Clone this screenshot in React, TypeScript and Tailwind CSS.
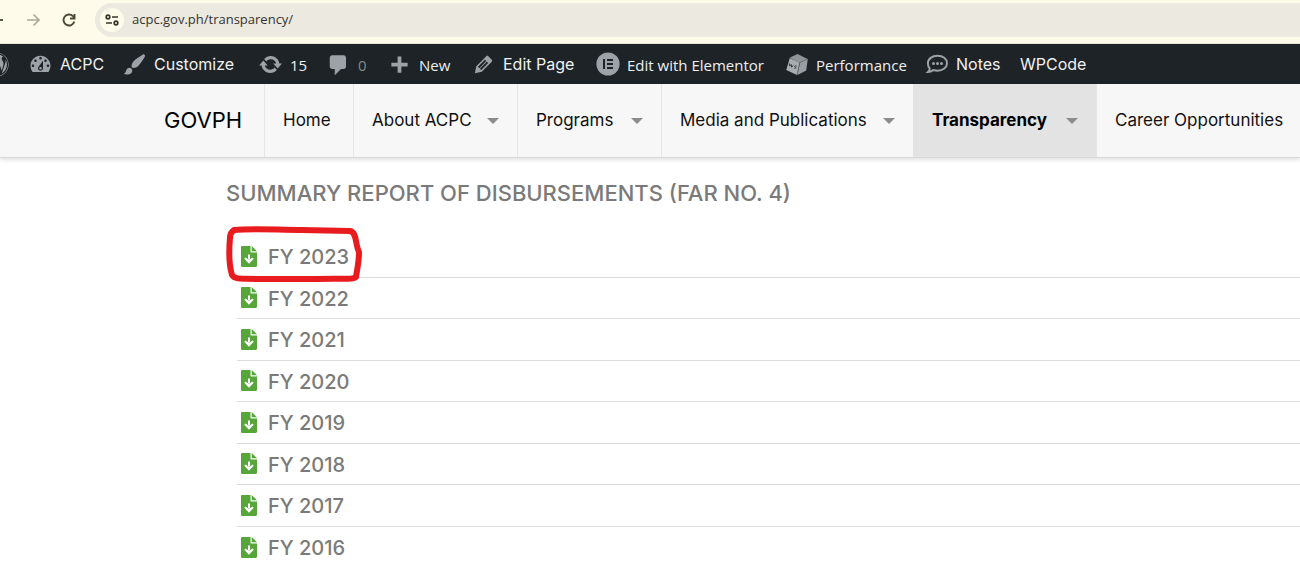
import type { ReactNode } from "react";
import { FaWordpress } from "react-icons/fa";

const reports = [2023, 2022, 2021, 2020, 2019, 2018, 2017, 2016];

function Dash({ d }: { d: string }) {
  return (
    <svg viewBox="0 0 20 20" className="size-[25px] shrink-0" fill="#9ca2a7" fillRule="evenodd" aria-hidden="true">
      <path d={d} />
    </svg>
  );
}

const icons = {
  dashboard:
    "M3.76 16h12.48c1.1-1.37 1.76-3.11 1.76-5 0-4.42-3.58-8-8-8s-8 3.58-8 8c0 1.89.66 3.63 1.76 5zM10 4c.55 0 1 .45 1 1s-.45 1-1 1-1-.45-1-1 .45-1 1-1zM6 6c.55 0 1 .45 1 1s-.45 1-1 1-1-.45-1-1 .45-1 1-1zm8 0c.55 0 1 .45 1 1s-.45 1-1 1-1-.45-1-1 .45-1 1-1zm-5.37 5.55L12 7v6c0 1.1-.9 2-2 2s-2-.9-2-2c0-.57.24-1.08.63-1.45zM4 10c.55 0 1 .45 1 1s-.45 1-1 1-1-.45-1-1 .45-1 1-1zm12 0c.55 0 1 .45 1 1s-.45 1-1 1-1-.45-1-1 .45-1 1-1zm-5 3c0-.55-.45-1-1-1s-1 .45-1 1 .45 1 1 1 1-.45 1-1z",
  brush:
    "M18.33 3.57s.27-.8-.31-1.36c-.53-.52-1.22-.24-1.22-.24-.61.3-5.76 3.47-7.67 5.57-.86.96-2.06 3.79-1.09 4.82.92.98 3.96-.17 4.79-1 2.06-2.06 5.21-7.17 5.5-7.79zM1.4 17.65c2.37-1.56 1.46-3.41 3.23-4.64.93-.65 2.22-.62 3.08.29.63.67.8 2.57-.16 3.46-1.57 1.45-4 1.55-6.15.89z",
  update:
    "M10.2 3.28c3.53 0 6.43 2.61 6.92 6h2.08l-3.5 4-3.5-4h2.32c-.45-1.97-2.21-3.45-4.32-3.45-1.45 0-2.73.71-3.54 1.78L4.95 5.66C6.23 4.2 8.11 3.28 10.2 3.28zm-.4 13.44c-3.52 0-6.43-2.61-6.92-6H.8l3.5-4c1.17 1.33 2.33 2.67 3.5 4H5.48c.45 1.97 2.21 3.45 4.32 3.45 1.45 0 2.73-.71 3.54-1.78l1.71 1.95c-1.28 1.46-3.15 2.38-5.25 2.38z",
  comment: "M5 2.500h9c1.1 0 2 .9 2 2v7c0 1.1-.9 2-2 2h-2l-5 5v-5H5c-1.1 0-2-.9-2-2v-7c0-1.1.9-2 2-2z",
  plus: "M16.500 8.500v3h-5v5h-3v-5h-5v-3h5v-5h3v5h5z",
  pencil:
    "M13.89 3.39l2.71 2.72c.46.46.42 1.24.03 1.64l-8.01 8.02-5.56 1.16 1.16-5.58s7.6-7.63 7.99-8.03c.39-.39 1.22-.39 1.68.07zm-2.73 2.79l-5.59 5.61 1.11 1.11 5.54-5.65zm-2.97 8.23l5.58-5.6-1.07-1.08-5.59 5.6z",
};

function ElementorIcon() {
  return (
    <svg viewBox="0 0 24 24" className="size-6 shrink-0" aria-hidden="true">
      <circle cx="12" cy="12" r="11.600" fill="#9ca2a7" />
      <path d="M7 7h2v10H7zM11 7h6v2h-6zM11 11h6v2h-6zM11 15h6v2h-6z" fill="#1d2327" />
    </svg>
  );
}

function CubeIcon() {
  return (
    <svg viewBox="0 0 24 24" className="size-6 shrink-0" aria-hidden="true">
      <path d="M5 5.500L12.500 2l10 5L13.500 11z" fill="#8f959a" />
      <path d="M4.800 6L14.500 10.500 12 23 1.200 18z" fill="#a7acb1" />
      <path d="M15 10.800L22.800 7l-1.600 11.500-8.700 4.500z" fill="#989ea3" />
      <path d="M4.800 6L14.500 10.500 22.500 7M14.500 10.500L12 23" stroke="#777d82" strokeWidth=".6" fill="none" />
      <path d="M4.200 11.500l.6 2.600 1.500-1.600.3 2.600 1.700-1.600M11.500 14c-1.500-.8-2.400.2-1.200 1s.2 1.800-1.200 1" stroke="#353b40" strokeWidth="1" fill="none" />
    </svg>
  );
}

function NotesIcon() {
  return (
    <svg viewBox="0 0 24 24" className="size-6 shrink-0" aria-hidden="true">
      <path d="M12.500 3.700c5.400 0 9.500 3.200 9.500 7.500s-4.100 7.500-9.500 7.500c-1.500 0-2.900-.3-4.200-.7-1.500 1.300-3.500 2-5.300 2 1.100-1 1.700-2.300 1.700-3.600C3.400 15 2.900 13.200 2.900 11.200c0-4.300 4.200-7.500 9.600-7.500z" fill="none" stroke="#9ca2a7" strokeWidth="2" />
      <circle cx="8.500" cy="11.500" r="1.500" fill="#9ca2a7" />
      <circle cx="12.500" cy="11.500" r="1.500" fill="#9ca2a7" />
      <circle cx="16.500" cy="11.500" r="1.500" fill="#9ca2a7" />
    </svg>
  );
}

function AdminItem({ icon, label, width, ui, dim }: { icon?: ReactNode; label: string; width: string; ui?: boolean; dim?: boolean }) {
  return (
    <a href="#" className={`flex shrink-0 items-center gap-[7px] ${width}`}>
      {icon}
      <span
        className={`whitespace-nowrap ${ui ? "pt-[3px] font-['Open_Sans',sans-serif] text-[15px]" : "font-[Inter,sans-serif] text-[16px]"} ${dim ? "text-[#848a8f]" : "text-[#f0f0f1]"}`}
      >
        {label}
      </span>
    </a>
  );
}

function NavItem({ label, width, menu, active }: { label: string; width: string; menu?: boolean; active?: boolean }) {
  return (
    <a
      href="#"
      aria-current={active ? "page" : undefined}
      className={`flex shrink-0 items-center justify-between border-l px-[18px] text-[17px] whitespace-nowrap ${width} ${active ? "border-[#e3e3e3] bg-[#e3e3e3] font-bold text-black" : "border-[#e6e6e6] text-[#111]"}`}
    >
      {label}
      {menu && (
        <svg viewBox="0 0 12 6" className="h-[6px] w-3" fill="#8c8c8c" aria-hidden="true">
          <path d="M0 0h12L6 6z" />
        </svg>
      )}
    </a>
  );
}

function FileIcon() {
  return (
    <svg viewBox="0 0 16 21" className="h-[21px] w-4 shrink-0" aria-hidden="true">
      <path d="M1.200 0H9.500v5.500c0 .6.400 1 1 1H16v13.300c0 .7-.5 1.200-1.200 1.200H1.200C.5 21 0 20.500 0 19.800V1.200C0 .5.500 0 1.200 0z" fill="#57a639" />
      <path d="M10.700 0L16 5.300h-5.300z" fill="#57a639" />
      <path d="M8 8.500v5" stroke="#fff" strokeWidth="2" />
      <path d="M3.300 12.800l1.200-1.200L8 14l3.500-2.400 1.200 1.200L8 17.800z" fill="#fff" />
    </svg>
  );
}

export default function App() {
  return (
    <div className="min-h-screen overflow-hidden bg-white font-[Inter,sans-serif]">
      <header className="flex h-11 items-center border-b border-[#e9e5d6] bg-[#fffbea] pb-1">
        <button aria-label="Back" className="h-[2px] w-[3px] bg-[#555743]" />
        <button aria-label="Forward" className="ml-[22px] size-4">
          <svg viewBox="0 0 16 16" fill="none" stroke="#aaa897" strokeWidth="1.700" aria-hidden="true">
            <path d="M2 8h12M8.500 2.500L14 8l-5.500 5.500" />
          </svg>
        </button>
        <button aria-label="Reload" className="ml-5 size-4">
          <svg viewBox="0 0 16 16" fill="none" stroke="#484a35" strokeWidth="1.900" aria-hidden="true">
            <path d="M13.300 9.500A5.500 5.500 0 1 1 12 4.200L13.600 6" />
            <path d="M13.500 2v4.500H9" />
          </svg>
        </button>
        <div className="ml-[18px] flex h-[34px] flex-1 items-center gap-2 rounded-l-full bg-[#ece9e1] pl-[5px]">
          <button aria-label="Site information" className="flex size-6 items-center justify-center rounded-full bg-[#fffbea]">
            <svg viewBox="0 0 14 12" className="h-3 w-[14px]" fill="none" stroke="#35362a" strokeWidth="1.700" aria-hidden="true">
              <circle cx="3" cy="3" r="1.800" />
              <path d="M7 3h6M1 9h6" />
              <circle cx="11" cy="9" r="1.800" />
            </svg>
          </button>
          <input
            aria-label="Address"
            defaultValue="acpc.gov.ph/transparency/"
            className="min-w-0 flex-1 bg-transparent pt-px font-['Open_Sans',sans-serif] text-[13px] text-[#34342d] outline-none"
          />
        </div>
      </header>

      <nav aria-label="Admin" className="flex h-10 items-center overflow-hidden bg-[#1d2327]">
        <a href="#" aria-label="WordPress" className="-ml-4 mr-[19px]">
          <FaWordpress className="size-[25px] text-[#9ca2a7]" aria-hidden="true" />
        </a>
        <AdminItem icon={<Dash d={icons.dashboard} />} label="ACPC" width="w-[94px]" />
        <AdminItem icon={<Dash d={icons.brush} />} label="Customize" width="w-[136px]" />
        <AdminItem icon={<Dash d={icons.update} />} label="15" width="w-[68px]" ui />
        <AdminItem icon={<Dash d={icons.comment} />} label="0" width="w-[61px]" ui dim />
        <AdminItem icon={<Dash d={icons.plus} />} label="New" width="w-[84px]" ui />
        <AdminItem icon={<Dash d={icons.pencil} />} label="Edit Page" width="w-[125px]" />
        <AdminItem icon={<ElementorIcon />} label="Edit with Elementor" width="w-[189px]" ui />
        <AdminItem icon={<CubeIcon />} label="Performance" width="w-[140px]" ui />
        <AdminItem icon={<NotesIcon />} label="Notes" width="w-[95px]" />
        <AdminItem label="WPCode" width="w-20" />
      </nav>

      <nav aria-label="Main" className="flex h-[74px] overflow-x-clip border-b border-[#d8d8d8] bg-[#f7f7f7] pl-[164px] shadow-[0_2px_4px_rgba(0,0,0,0.12)]">
        <a href="#" className="flex w-[100px] shrink-0 items-center text-[22px] text-black">
          GOVPH
        </a>
        <NavItem label="Home" width="w-[89px]" />
        <NavItem label="About ACPC" width="w-[164px]" menu />
        <NavItem label="Programs" width="w-36" menu />
        <NavItem label="Media and Publications" width="w-[252px]" menu />
        <NavItem label="Transparency" width="w-[183px]" menu active />
        <NavItem label="Career Opportunities" width="w-[208px]" />
      </nav>

      <main className="pt-5 pl-[226px] text-[#7a7a7a]">
        <h1 className="text-[22px] leading-[30px] font-medium whitespace-nowrap">SUMMARY REPORT OF DISBURSEMENTS (FAR NO. 4)</h1>
        <div className="relative mt-7 ml-[11px]">
          <ul className="grid h-[332px] auto-rows-fr">
            {reports.map((year) => (
              <li key={year} className="flex border-b border-[#dcdcdc] last:border-b-0">
                <a href="#" className="flex items-center gap-[11px] pl-1 text-[20px] font-medium">
                  <FileIcon />
                  <span className="pt-[2px]">FY {year}</span>
                </a>
              </li>
            ))}
          </ul>
          <svg viewBox="0 0 136 58" className="pointer-events-none absolute -top-[10px] -left-[11px] h-[58px] w-[136px]" fill="none" aria-hidden="true">
            <path
              d="M8 4C28 2 52 4 76 4L124 5C131 6 129 18 133 26C133 36 131 44 130 51C127 54 116 52 90 53L30 53C16 52 9 54 6 49C3 39 3 23 4 12C4 8 5 6 8 4Z"
              stroke="#e81c1f"
              strokeWidth="6"
              strokeLinejoin="round"
            />
          </svg>
        </div>
      </main>
    </div>
  );
}
